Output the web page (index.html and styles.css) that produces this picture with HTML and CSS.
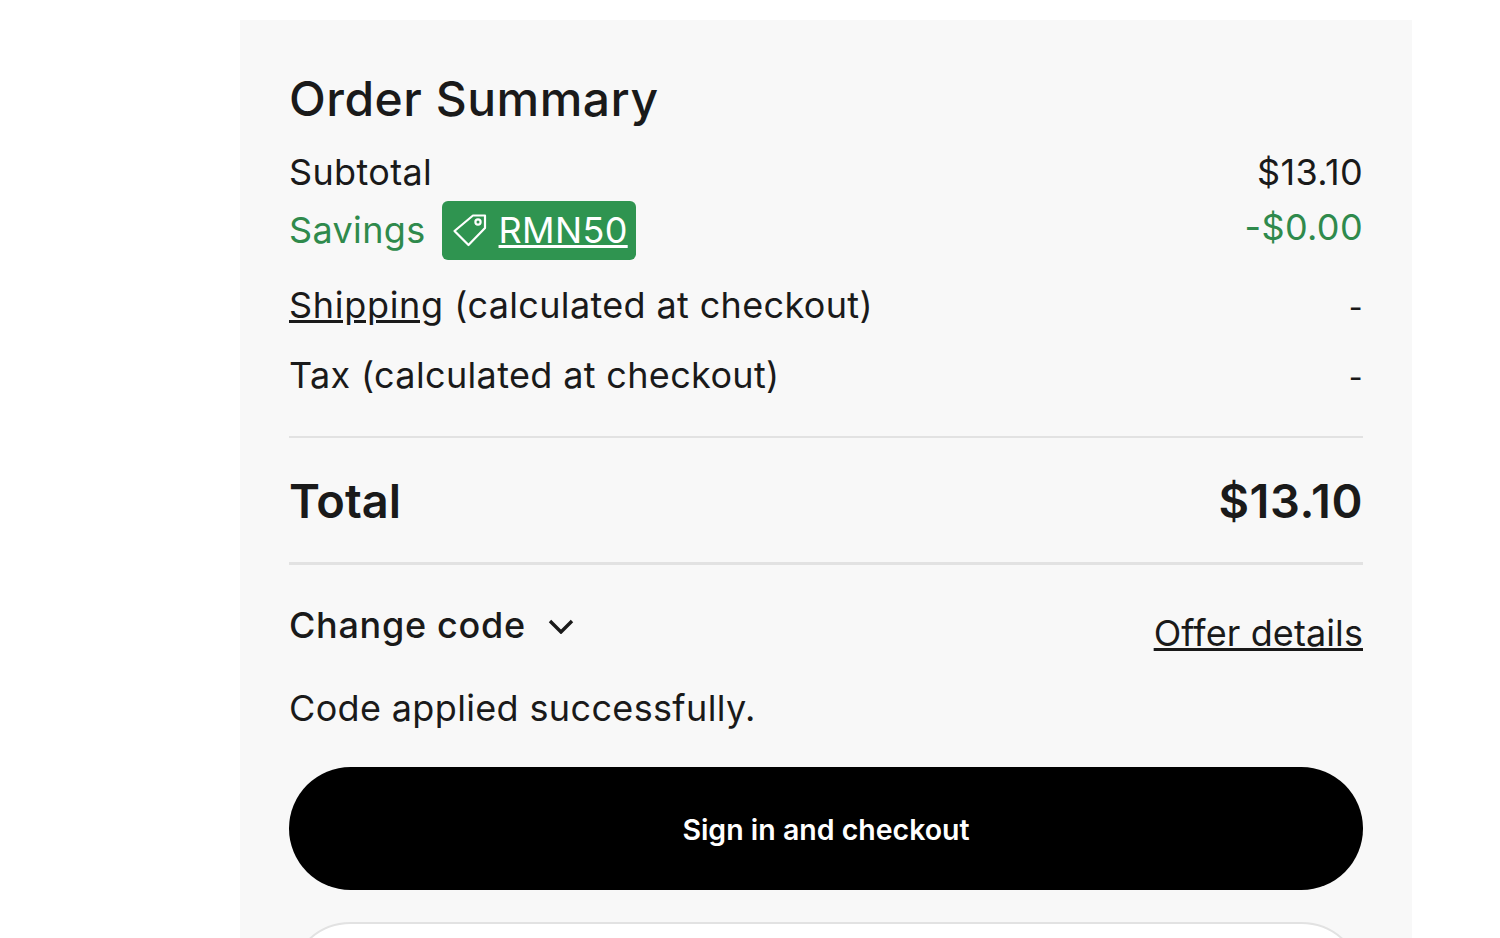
FILE: index.html
```html
<!DOCTYPE html>
<html lang="en">
<head>
  <meta charset="UTF-8" />
  <title>Order Summary</title>
  <link rel="stylesheet" href="styles.css">
</head>
<body>
  <div class="summary">
    <h1>Order Summary</h1>

    <div class="row subtotal">
      <span>Subtotal</span>
      <span>$13.10</span>
    </div>

    <div class="row savings">
      <div class="savings-left">
        <span>Savings</span>
        <span class="promo">
          <svg class="tag-icon" viewBox="0 0 36 36" fill="none" stroke="#fff" stroke-width="2.2" stroke-linejoin="round">
            <path d="M21 3.5h12v12.5L16.5 33 2.5 19z"/>
            <circle cx="26" cy="10" r="2.6"/>
          </svg>
          <a href="#">RMN50</a>
        </span>
      </div>
      <span class="savings-amount">-$0.00</span>
    </div>

    <div class="row shipping">
      <span><a href="#" class="shipping-link">Shipping</a> (calculated at checkout)</span>
      <span class="dash">-</span>
    </div>

    <div class="row tax">
      <span>Tax (calculated at checkout)</span>
      <span class="dash">-</span>
    </div>

    <div class="row total">
      <span>Total</span>
      <span class="total-amount">$13.10</span>
    </div>

    <div class="row code-row">
      <button class="change-code">
        Change code
        <svg class="chevron" viewBox="0 0 26 16" fill="none" stroke="#1a1a1a" stroke-width="3.4">
          <path d="M2 3l11 11L24 3"/>
        </svg>
      </button>
      <a href="#" class="offer-link">Offer details</a>
    </div>

    <p class="code-msg">Code applied successfully.</p>

    <button class="checkout-btn">Sign in and checkout</button>
    <button class="guest-btn"></button>
  </div>
</body>
</html>
```

FILE: styles.css
```css
html, body {
  height: 100%;
  overflow: hidden;
}

body {
  margin: 0;
  background-color: #fff;
  color: #1a1a1a;
  font-family: "Inter", sans-serif;
  font-size: 36px;
  letter-spacing: 0.35px;
}

.summary {
  box-sizing: border-box;
  width: 1172px;
  height: 918px;
  margin: 20px 0 0 240px;
  padding: 50px 49px 0;
  background-color: #f8f8f8;
  overflow: hidden;
}

h1 {
  margin: 0;
  font-size: 48px;
  font-weight: 500;
  line-height: 58px;
  letter-spacing: 0.5px;
}

a {
  color: inherit;
}

.row {
  display: flex;
  justify-content: space-between;
  align-items: center;
}

.subtotal {
  height: 44px;
  margin-top: 22px;
}

.savings {
  height: 60px;
  margin-top: 6px;
  color: #2f8a4c;
}

.savings-left {
  display: flex;
  align-items: center;
  gap: 16px;
}

.promo {
  display: flex;
  align-items: center;
  gap: 11px;
  height: 59px;
  padding: 0 8px 0 10px;
  background-color: #2f9450;
  border-radius: 6px;
  color: #fff;
}

.tag-icon {
  width: 36px;
  height: 36px;
}

.savings-amount {
  align-self: flex-start;
  margin-top: 5px;
}

.shipping {
  height: 44px;
  margin-top: 23px;
}

.shipping-link {
  letter-spacing: 0.7px;
}

.dash {
  margin-top: 4px;
  font-size: 30px;
}

.tax {
  height: 44px;
  margin-top: 26px;
  padding-bottom: 39px;
  border-bottom: 2px solid #e2e2e2;
}

.total {
  height: 124px;
  border-bottom: 3px solid #e2e2e2;
  font-size: 47px;
  font-weight: 600;
  letter-spacing: 0;
}

.total-amount {
  letter-spacing: 0.6px;
}

.code-row {
  height: 83px;
  align-items: flex-start;
  padding-top: 38px;
}

.change-code {
  display: flex;
  align-items: center;
  gap: 22px;
  padding: 0;
  border: none;
  background: none;
  color: inherit;
  font: inherit;
  font-weight: 500;
  letter-spacing: 0.7px;
}

.chevron {
  width: 26px;
  height: 16px;
  margin-top: 2px;
}

.offer-link {
  margin-top: 8px;
  letter-spacing: 0.1px;
}

.code-msg {
  margin: 0 0 37px;
  line-height: 44px;
}

.checkout-btn {
  display: block;
  width: 100%;
  height: 123px;
  padding-top: 3px;
  border: none;
  border-radius: 62px;
  background-color: #000;
  color: #fff;
  font-family: inherit;
  font-size: 28.5px;
  font-weight: 600;
}

.guest-btn {
  display: block;
  width: 100%;
  height: 123px;
  margin-top: 32px;
  border: 2px solid #e2e2e2;
  border-radius: 62px;
  background-color: #fff;
}
```
